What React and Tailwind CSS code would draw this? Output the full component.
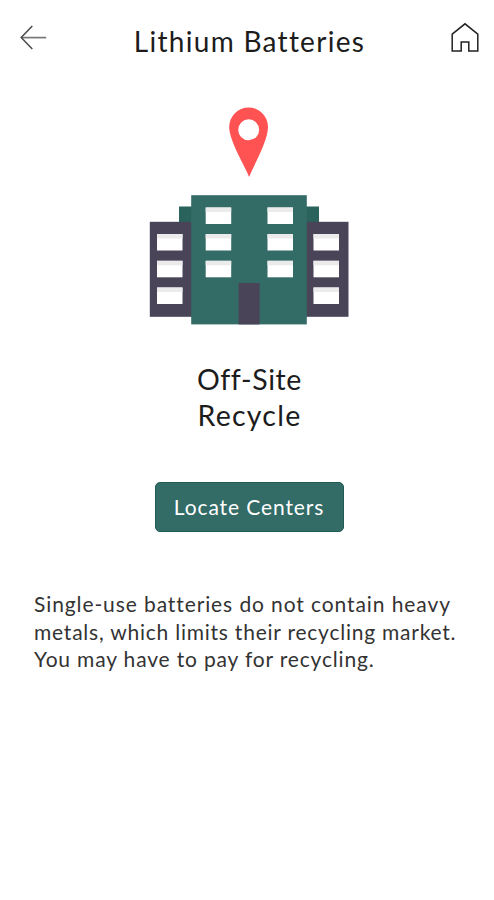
// Recycling option screen: illustration, action and a short note for one material
const WINDOW_ROWS = [
    { y: 207.5, columns: [205.7, 267.5] },
    { y: 234, columns: [157, 205.7, 267.5, 313.5] },
    { y: 260.8, columns: [157, 205.7, 267.5, 313.5] },
    { y: 287.5, columns: [157, 313.5] },
];

function BackIcon() {
    return (
        <svg className="h-[26px] w-[28px]" viewBox="0 0 28 26" fill="none" stroke="#4a4a4a" strokeWidth="1.5">
            <path d="M26.2 12.6H1.4" stroke="#777777" strokeWidth="1.7" />
            <path d="M12.3 1L1.2 12.6L12.3 24" />
        </svg>
    );
}

function HomeIcon() {
    return (
        <svg className="h-[30px] w-[28px]" viewBox="0 0 28 30" fill="none" stroke="#222222" strokeWidth="1.5">
            <path d="M1.2 12.2L14 1.8L26.8 12.2V29H17.8V20H10.2V29H1.2Z" />
        </svg>
    );
}

function BuildingIllustration() {
    return (
        <svg className="h-[220px] w-[200px]" viewBox="149 106 200 220">
            <path
                fill="#ff5252"
                fillRule="evenodd"
                d="M249.2 177C245.5 167 229.2 141 229.2 127A19.4 19.4 0 0 1 268 127C268 141 252.8 167 249.2 177ZM248.7 119.3A10.5 10.5 0 1 0 248.7 140.3A10.5 10.5 0 1 0 248.7 119.3Z"
            />
            <rect x="179" y="206.5" width="140" height="30" fill="#2a625c" />
            <rect x="149.8" y="221.8" width="198.7" height="95" fill="#494458" />
            <rect x="191.2" y="195.2" width="115.6" height="129.2" fill="#336b66" />
            <rect x="238.6" y="283" width="21" height="41.4" fill="#494458" />
            {WINDOW_ROWS.map(({ y, columns }) =>
                columns.map((x) => (
                    <g key={`${x}-${y}`}>
                        <rect x={x} y={y} width="25.5" height="16.5" fill="#ffffff" />
                        <rect x={x} y={y} width="25.5" height="4.5" fill="#ebebeb" />
                    </g>
                ))
            )}
        </svg>
    );
}

export default function App() {
    return (
        <div className="flex h-[900px] w-[494px] flex-col items-center overflow-hidden bg-white font-['Lato',sans-serif] text-[#1c1c1c]">
            <header className="flex h-[82px] w-full items-start justify-between pr-[15px] pl-[20px]">
                <button className="mt-[25px]" aria-label="Back"><BackIcon /></button>
                <h1 className="mt-[23px] text-[28px] leading-[36px] tracking-[1.28px] whitespace-nowrap">Lithium Batteries</h1>
                <button className="mt-[22px]" aria-label="Home"><HomeIcon /></button>
            </header>

            <main className="flex w-full flex-col items-center pt-[24px]">
                <div className="ml-[4px]"><BuildingIllustration /></div>
                <h2 className="mt-[35px] ml-[5px] text-center text-[28.5px] leading-[36px]">
                    <span className="block tracking-[0.6px]">Off-Site</span>
                    <span className="block tracking-[1.25px]">Recycle</span>
                </h2>
                <button className="mt-[49px] ml-[4px] h-[50px] w-[189px] rounded-[5px] border border-[#1f5b55] bg-[#336b66] text-[21px] tracking-[0.9px] whitespace-nowrap text-white">
                    Locate Centers
                </button>
                <p className="mt-[58px] w-full pl-[34px] text-[21px] leading-[27.7px] whitespace-nowrap text-[#333333]">
                    <span className="block tracking-[0.9px]">Single-use batteries do not contain heavy</span>
                    <span className="block tracking-[0.77px]">metals, which limits their recycling market.</span>
                    <span className="block tracking-[0.83px]">You may have to pay for recycling.</span>
                </p>
            </main>
        </div>
    );
}
